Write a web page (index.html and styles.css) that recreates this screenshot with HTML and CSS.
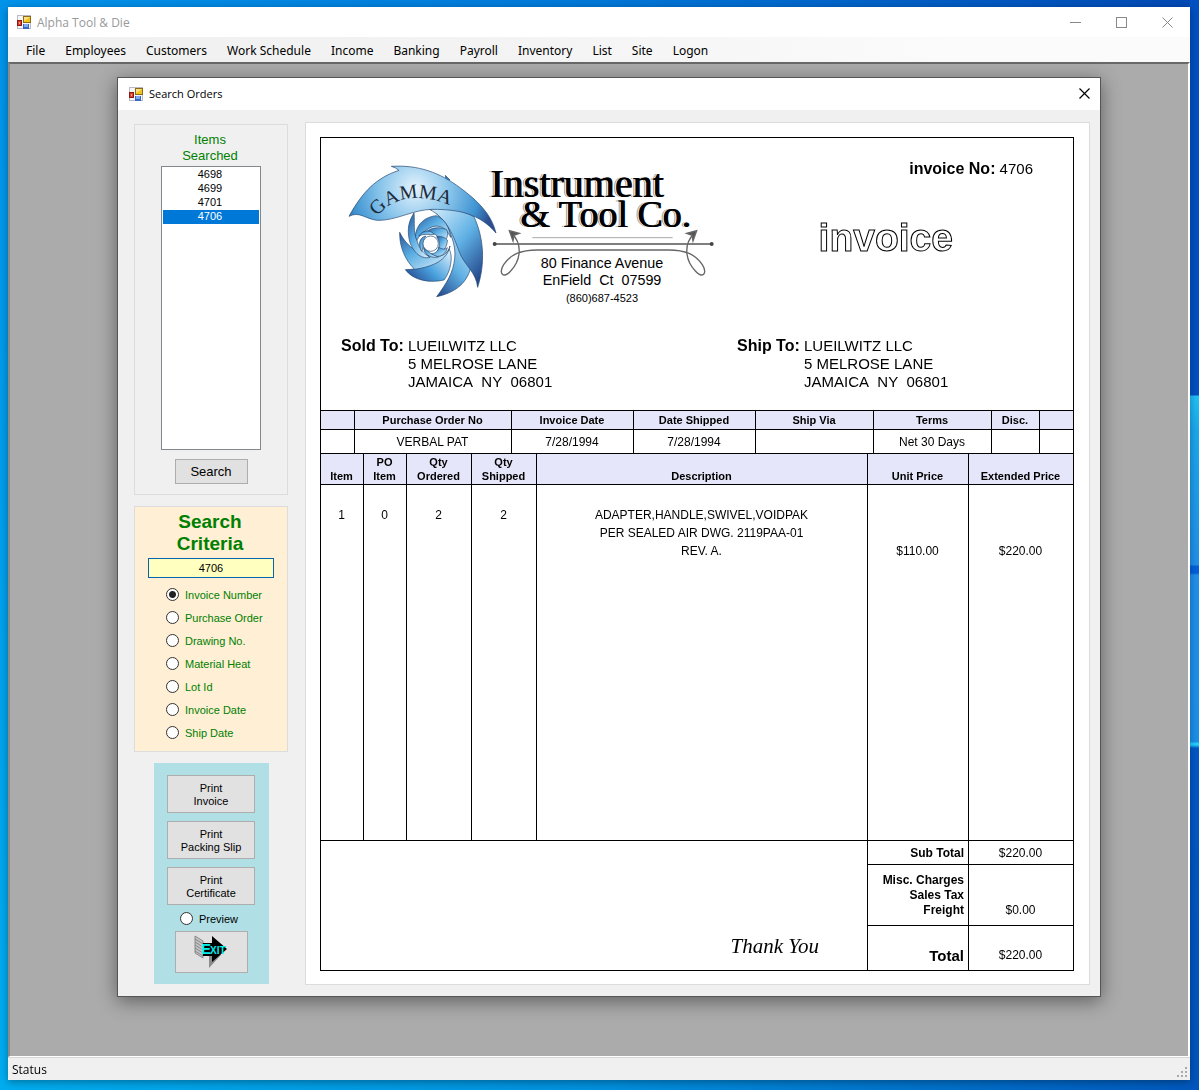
FILE: index.html
```html
<!DOCTYPE html>
<html lang="en">
<head>
<meta charset="utf-8">
<title>Alpha Tool &amp; Die</title>
<link rel="stylesheet" href="styles.css">
</head>
<body>
<svg width="0" height="0" class="defs" aria-hidden="true">
  <symbol id="form-icon" viewBox="0 0 14 14">
    <rect x=".5" y=".5" width="13" height="13" fill="#f6f6f6" stroke="#b9bcc4"/>
    <path d="M6 1h8v7H6z" fill="#8a6a1c"/><path d="M7 2h6v5H7z" fill="#f5c21d"/><path d="M7 2h6L7 6z" fill="#fbe27c"/>
    <path d="M0 5h5v6H0z" fill="#8f1a14"/><path d="M1 6h3v4H1z" fill="#d8402c"/><path d="M2 7h1v2H2z" fill="#f6a08c"/>
    <path d="M6 9h6v5H6z" fill="#3967c8"/><path d="M7 9h4v3H7z" fill="#82aaf0"/>
  </symbol>
</svg>
<div class="app">
  <header class="titlebar titlebar-app">
    <svg class="form-icon" aria-hidden="true"><use href="#form-icon"/></svg>
    <span class="caption">Alpha Tool &amp; Die</span>
    <div class="window-buttons">
      <button type="button" aria-label="Minimize"><svg width="11" height="11"><path d="M0 5.500h11" stroke="#888"/></svg></button>
      <button type="button" aria-label="Maximize"><svg width="11" height="11"><rect x=".5" y=".5" width="10" height="10" fill="none" stroke="#888"/></svg></button>
      <button type="button" aria-label="Close"><svg width="11" height="11"><path d="M.5 .5l10 10M10.500 .5l-10 10" stroke="#888"/></svg></button>
    </div>
  </header>
  <nav class="menu">
    <a href="#">File</a><a href="#">Employees</a><a href="#">Customers</a><a href="#">Work Schedule</a><a href="#">Income</a><a href="#">Banking</a><a href="#">Payroll</a><a href="#">Inventory</a><a href="#">List</a><a href="#">Site</a><a href="#">Logon</a>
  </nav>
  <main class="workspace">
    <section class="dialog">
      <header class="titlebar titlebar-dialog">
        <svg class="form-icon" aria-hidden="true"><use href="#form-icon"/></svg>
        <span class="caption">Search Orders</span>
        <button type="button" class="dialog-close" aria-label="Close"><svg width="11" height="11"><path d="M.5 .5l10 10M10.500 .5l-10 10" stroke="#000" stroke-width="1.200"/></svg></button>
      </header>
      <div class="dialog-body">
        <aside class="sidebar">
          <section class="group results">
            <label class="results-title" for="items">Items<br>Searched</label>
            <select id="items" class="listbox" size="20">
              <option>4698</option><option>4699</option><option>4701</option><option selected>4706</option>
            </select>
            <button type="button" class="btn btn-search">Search</button>
          </section>
          <form class="group criteria">
            <h2>Search<br>Criteria</h2>
            <input type="text" class="term" value="4706" aria-label="Search term" autofocus>
            <div class="options">
              <label><input type="radio" name="by" checked>Invoice Number</label>
              <label><input type="radio" name="by">Purchase Order</label>
              <label><input type="radio" name="by">Drawing No.</label>
              <label><input type="radio" name="by">Material Heat</label>
              <label><input type="radio" name="by">Lot Id</label>
              <label><input type="radio" name="by">Invoice Date</label>
              <label><input type="radio" name="by">Ship Date</label>
            </div>
          </form>
          <section class="actions">
            <button type="button" class="btn btn-print">Print<br>Invoice</button>
            <button type="button" class="btn btn-print">Print<br>Packing Slip</button>
            <button type="button" class="btn btn-print">Print<br>Certificate</button>
            <label class="preview"><input type="radio" name="preview">Preview</label>
            <button type="button" class="btn btn-exit" aria-label="Exit">
              <svg width="34" height="34" viewBox="0 0 34 34">
                <path d="M15 20l0 13 12-13z" fill="#8b8b8b"/>
                <g fill="#c4c4c4" stroke="#777" stroke-width=".8">
                  <path d="M1 1l8 5v17l-8-5z"/>
                  <path d="M1 4l8 5M1 7l8 5M1 10l8 5M1 13l8 5M1 16l8 5"/>
                </g>
                <path d="M9 8h9V1l15 13-15 13v-6H9z" fill="#000"/>
                <text x="7" y="19" class="exit-big">E</text><text x="16" y="19" class="exit-small">XIT</text>
              </svg>
            </button>
          </section>
        </aside>

        <div class="sheet">
          <article class="invoice">
            <header class="invoice-head">
              <div class="brand-row">
                <svg class="logo" viewBox="54 36 1098 450" role="img" aria-label="Gamma Instrument and Tool Co.">
                  <defs>
                    <radialGradient id="hood" gradientUnits="userSpaceOnUse" cx="255" cy="115" r="240">
                      <stop offset="0" stop-color="#e4f3fd"/><stop offset=".45" stop-color="#86c3ea"/><stop offset=".8" stop-color="#3f93d2"/><stop offset="1" stop-color="#2b4f92"/>
                    </radialGradient>
                    <linearGradient id="fin1" x1="0" y1="0" x2=".8" y2="1"><stop offset="0" stop-color="#d9effc"/><stop offset=".55" stop-color="#5fb0e4"/><stop offset="1" stop-color="#24498c"/></linearGradient>
                    <linearGradient id="fin2" x1=".7" y1="0" x2=".2" y2="1"><stop offset="0" stop-color="#e4f4fd"/><stop offset=".6" stop-color="#5fb0e4"/><stop offset="1" stop-color="#264d90"/></linearGradient>
                    <linearGradient id="fin3" x1="1" y1="0" x2="0" y2=".7"><stop offset="0" stop-color="#e6f5fd"/><stop offset=".6" stop-color="#4aa2de"/><stop offset="1" stop-color="#2a569a"/></linearGradient>
                    <linearGradient id="fin4" x1="1" y1="1" x2="0" y2="0"><stop offset="0" stop-color="#e6f5fd"/><stop offset=".6" stop-color="#58ace2"/><stop offset="1" stop-color="#2a569a"/></linearGradient>
                    <path id="arc" d="M142 200C184 140 287 120 394 184"/>
                    <g id="curl">
                      <path d="M545 250C578 282 573 330 542 363C520 388 505 370 521 344C542 313 572 300 622 300H819"/>
                      <path d="M538 242l30 8-16 6-3 17z" fill="#555"/>
                    </g>
                  </defs>
                  <g stroke="#23466f" stroke-width="2" stroke-linejoin="round">
                    <path fill="url(#fin2)" d="M352 228C366 262 378 290 374 325C370 368 350 400 320 440C390 425 420 385 425 335C405 280 375 220 310 180Z"/>
                    <path fill="url(#fin1)" d="M298 178C352 205 372 262 388 306C402 345 438 365 443 412C466 340 462 265 432 200C390 176 340 172 298 178Z"/>
                    <path fill="url(#fin3)" d="M226 359C280 358 325 340 358 298C370 320 362 365 342 390C300 400 250 392 226 359Z"/>
                    <path fill="url(#fin4)" d="M209 247C230 290 270 322 330 318C350 312 357 300 360 288C352 330 310 350 254 358C225 330 208 290 209 247Z"/>
                    <path fill="url(#fin4)" d="M318 197C345 207 357 230 362 262C345 225 315 220 290 240C275 250 262 262 257 282C250 240 270 203 318 197Z"/>
                    <path fill="url(#fin4)" d="M252 189C255 215 248 245 262 275C268 295 280 310 300 322C270 330 245 300 238 270C230 235 238 210 252 189Z"/>
                    <g fill="url(#fin4)">
                      <path d="M350 239C328 229 300 232 287 248C310 244 328 258 332 278C350 272 358 255 350 239Z"/>
                      <path d="M352 270C345 262 335 258 320 260C330 275 330 292 322 304C340 306 352 292 352 270Z"/>
                      <path d="M352 293C344 300 334 297 326 292C324 305 314 312 302 311C318 326 346 320 352 293Z"/>
                      <path d="M325 321C306 314 290 305 282 288C276 304 296 328 325 321Z"/>
                      <path d="M275 304C282 290 276 275 287 258C270 262 262 282 275 304Z"/>
                      <path d="M267 257C284 250 296 255 312 253C304 240 280 238 267 257Z"/>
                    </g>
                    <circle cx="302" cy="281" r="23" fill="#fff"/>
                    <path fill="#3b8bc9" d="M346 76l14 14-12 2z"/>
                    <path fill="url(#hood)" d="M57 199C98 125 138 84 207 61Q198 53 184 49C265 44 330 68 390 113C440 150 484 190 498 249C448 190 385 178 308 178C250 178 195 214 140 211C105 206 88 183 57 199Z"/>
                  </g>
                  <text class="logo-arc"><textPath href="#arc">GAMMA</textPath></text>
                  <text x="480" y="142" class="logo-name">Instrument</text>
                  <text x="570" y="231" class="logo-name logo-name-2">&amp; Tool Co.</text>
                  <path d="M607 263h421" stroke="#aaa" stroke-width="3"/>
                  <path d="M494 282h651" stroke="#555" stroke-width="4"/>
                  <g fill="#444"><circle cx="494" cy="282" r="6"/><circle cx="1145" cy="282" r="6"/></g>
                  <g fill="none" stroke="#666" stroke-width="4"><use href="#curl"/><use href="#curl" transform="matrix(-1 0 0 1 1638 0)"/></g>
                  <g class="logo-address">
                    <text x="816" y="354">80 Finance Avenue</text>
                    <text x="816" y="405">EnField&nbsp; Ct&nbsp; 07599</text>
                    <text x="816" y="456" class="logo-phone">(860)687-4523</text>
                  </g>
                </svg>
                <div class="invoice-id">
                  <p class="number"><b>invoice No:</b> 4706</p>
                  <h1>invoice</h1>
                </div>
              </div>
              <div class="addresses">
                <div class="address"><b>Sold To:</b><address>LUEILWITZ LLC<br>5 MELROSE LANE<br>JAMAICA&nbsp; NY&nbsp; 06801</address></div>
                <div class="address"><b>Ship To:</b><address>LUEILWITZ LLC<br>5 MELROSE LANE<br>JAMAICA&nbsp; NY&nbsp; 06801</address></div>
              </div>
            </header>

            <table class="grid order">
              <colgroup><col class="w34"><col class="w157"><col class="w122"><col class="w122"><col><col class="w118"><col class="w48"><col class="w33"></colgroup>
              <thead><tr><th></th><th>Purchase Order No</th><th>Invoice Date</th><th>Date Shipped</th><th>Ship Via</th><th>Terms</th><th>Disc.</th><th></th></tr></thead>
              <tbody><tr><td></td><td>VERBAL PAT</td><td>7/28/1994</td><td>7/28/1994</td><td></td><td>Net 30 Days</td><td></td><td></td></tr></tbody>
            </table>

            <table class="grid lines">
              <colgroup><col class="w43"><col class="w43"><col class="w65"><col class="w65"><col><col class="w101"><col class="w104"></colgroup>
              <thead><tr><th>Item</th><th>PO<br>Item</th><th>Qty<br>Ordered</th><th>Qty<br>Shipped</th><th>Description</th><th>Unit Price</th><th>Extended Price</th></tr></thead>
              <tbody><tr><td>1</td><td>0</td><td>2</td><td>2</td><td>ADAPTER,HANDLE,SWIVEL,VOIDPAK<br>PER SEALED AIR DWG. 2119PAA-01<br>REV. A.</td><td class="price">$110.00</td><td class="price">$220.00</td></tr></tbody>
            </table>

            <table class="grid totals">
              <colgroup><col><col class="w101"><col class="w104"></colgroup>
              <tbody>
                <tr class="subtotal"><td rowspan="3" class="thanks">Thank You</td><th>Sub Total</th><td>$220.00</td></tr>
                <tr class="charges"><th>Misc. Charges<br>Sales Tax<br>Freight</th><td>$0.00</td></tr>
                <tr class="total"><th>Total</th><td>$220.00</td></tr>
              </tbody>
            </table>
          </article>
        </div>
      </div>
    </section>
  </main>
  <footer class="status"><span>Status</span>
    <svg width="11" height="11" fill="#aaa" aria-hidden="true"><path d="M8 0h2v2H8zM4 4h2v2H4zM8 4h2v2H8zM0 8h2v2H0zM4 8h2v2H4zM8 8h2v2H8z"/></svg>
  </footer>
</div>
</body>
</html>
```
FILE: styles.css
```css
* { box-sizing: border-box; }

body {
  margin: 0;
  min-height: 100vh;
  padding: 7px 9px 10px 8px;
  display: flex;
  font-family: "Liberation Sans", Arial, sans-serif;
  font-size: 12px;
  color: #000;
  background:
    linear-gradient(#0050c4 0 395px, #1fc0f8 396px 398px, #1ba8ee 430px, #2090ea 565px, #0062dc 566px 573px, #2090ea 575px, #1b90ea 742px, #22d0ff 743px 745px, #0058c8 748px, #0055bc) right top / 9px 100% no-repeat,
    linear-gradient(to right, #00adef, #0090dd 50%, #0058bc) left bottom / 100% 10px no-repeat,
    linear-gradient(#0093ea, #00adf0) left top / 8px 100% no-repeat,
    linear-gradient(to right, #0093ea, #0078d8 50%, #0048b4);
}

.defs { position: absolute; }

button { font: inherit; color: inherit; }
p, h1, h2 { margin: 0; }

.app {
  flex: 1;
  min-width: 0;
  display: flex;
  flex-direction: column;
  background: #f0f0f0;
  box-shadow: 0 2px 8px rgba(0, 0, 0, .35);
}

.titlebar {
  display: flex;
  align-items: center;
  background: #fff;
  font-family: "Open Sans", "Noto Sans", sans-serif;
}
.titlebar-app { height: 30px; padding-left: 9px; font-size: 12px; color: #999; }
.titlebar-dialog { height: 32px; padding: 0 0 1px 11px; font-size: 11px; }
.form-icon { width: 14px; height: 14px; }
.caption { flex: 1; padding-left: 6px; }

.window-buttons { display: flex; }
.window-buttons button,
.dialog-close {
  width: 46px;
  height: 28px;
  padding: 0;
  border: 0;
  background: none;
  display: grid;
  place-items: center;
}
.dialog-close { width: 31px; }

.menu {
  height: 25px;
  padding: 1px 0 0 18px;
  display: flex;
  align-items: center;
  gap: 20px;
  background: linear-gradient(to right, #f0f0f0, #f3f3f3 40%, #fbfbfb 80%);
  font-family: "Noto Sans", "Open Sans", sans-serif;
  font-size: 12px;
}
.menu a { color: #000; text-decoration: none; }

.workspace {
  flex: 1;
  padding: 13px 87px 59px 107px;
  border: 2px solid #696969;
  border-width: 2px 2px 1px;
  border-color: #696969 #fff #fff #8a8a8a;
  background: #ababab;
}

.dialog {
  border: 1px solid #555;
  background: #f0f0f0;
  box-shadow: 0 4px 18px rgba(0, 0, 0, .45);
}
.dialog-body {
  display: flex;
  gap: 17px;
  padding: 12px 10px 11px 16px;
}

.sidebar {
  width: 154px;
  padding-top: 2px;
  display: flex;
  flex-direction: column;
  align-items: center;
  font-size: 11px;
}
.group {
  width: 100%;
  border: 1px solid #dcdcdc;
  display: flex;
  flex-direction: column;
  align-items: center;
  margin-bottom: 11px;
}
.results { padding: 7px 0 10px; }
.results-title {
  margin-bottom: 2px;
  padding-right: 2px;
  font-size: 13px;
  line-height: 16px;
  text-align: center;
  color: #008000;
}
.listbox {
  width: 100px;
  height: 284px;
  margin-bottom: 9px;
  padding: 1px;
  border: 1px solid #828790;
  border-radius: 0;
  background: #fff;
  font: 11px/14px "Liberation Sans", Arial, sans-serif;
  overflow: hidden;
  outline: 0;
}
.listbox option { min-height: 14px; padding: 0 2px 0 0; line-height: 14px; text-align: center; }
.listbox option:checked {
  background: linear-gradient(#0078d7, #0078d7);
  -webkit-text-fill-color: #fff;
}

.btn {
  padding: 0;
  border: 1px solid #adadad;
  background: #e1e1e1;
}
.btn-search { width: 73px; height: 25px; font-size: 13px; }

.criteria { padding: 4px 0 7px; background: #ffefd5; color: #008000; }
.criteria h2 { padding-right: 2px; font-size: 19px; line-height: 22px; text-align: center; }
.term {
  width: 126px;
  height: 20px;
  margin: 3px 0 5px;
  padding: 0;
  border: 1px solid #0a64ad;
  background: #ffffc0;
  font: 11px "Liberation Sans", Arial, sans-serif;
  text-align: center;
  outline: 0;
}
.options { align-self: stretch; padding-left: 31px; }
.options label,
.preview { display: flex; align-items: center; gap: 6px; height: 23px; }
input[type="radio"] {
  appearance: none;
  width: 13px;
  height: 13px;
  margin: 0;
  border: 1px solid #333;
  border-radius: 50%;
  background: #fff;
}
input[type="radio"]:checked { background: radial-gradient(circle, #222 3px, #fff 4px); }

.actions {
  width: 115px;
  padding: 12px 0 11px;
  display: flex;
  flex-direction: column;
  align-items: center;
  background: #b0e0e6;
}
.btn-print { width: 88px; height: 38px; margin-bottom: 8px; padding-top: 1px; line-height: 13px; }
.preview { height: 21px; margin: -5px 0 2px; padding-right: 4px; }
.btn-exit { width: 73px; height: 42px; display: grid; place-items: center; }
.exit-big, .exit-small { font-family: "Liberation Sans", Arial, sans-serif; font-weight: bold; fill: #00f0f0; }
.exit-big { font-size: 15px; }
.exit-small { font-size: 10px; }

.sheet {
  flex: 1;
  min-width: 0;
  padding: 14px 15px 13px 14px;
  border: 1px solid #dcdcdc;
  background: #fff;
}
.invoice { border: 1px solid #000; }

.invoice-head { height: 272px; padding-top: 22px; }
.brand-row {
  display: flex;
  justify-content: space-between;
  padding: 0 40px 0 27px;
  margin-bottom: 25px;
}
.logo { width: 366px; height: 150px; margin-top: 2px; }
.logo-arc { font: 60px "Liberation Serif", serif; fill: #1d2b3a; }
.logo-name {
  font: 120px "Liberation Serif", serif;
  text-shadow: 1px 0 #000, -1px 0 #fff, -2px 0 #999;
}
.logo-name-2 { font-size: 114px; }
.logo-address { font: 43px "Liberation Sans", Arial, sans-serif; text-anchor: middle; }
.logo-phone { font-size: 33px; }

.invoice-id { display: flex; flex-direction: column; align-items: flex-end; }
.number { font-size: 15px; line-height: 18px; }
.number b { font-size: 16px; }
.invoice-id h1 {
  margin: 34px 80px 0 0;
  font: bold 39px/52px "Liberation Sans", Arial, sans-serif;
  color: #fff;
  -webkit-text-stroke: 1px #000;
}

.addresses { display: grid; grid-template-columns: 396px 1fr; padding-left: 20px; }
.address { display: flex; gap: 4px; font-size: 15px; line-height: 18px; }
.address b { font-size: 16px; width: 63px; white-space: nowrap; }
.address address { font-style: normal; }

.grid {
  width: 100%;
  table-layout: fixed;
  border-collapse: separate;
  border-spacing: 0;
  text-align: center;
}
.grid th, .grid td {
  padding: 0 1px 0 0;
  border-right: 1px solid #000;
  border-bottom: 1px solid #000;
}
.grid tr > :last-child { border-right: 0; }
.grid thead th { background: #e6e6fa; font-size: 11px; line-height: 14px; }
.order { border-top: 1px solid #000; }
.order th { height: 19px; }
.order td { height: 24px; }
.lines th { height: 31px; padding-bottom: 1px; vertical-align: bottom; }
.lines td { height: 356px; padding-top: 21px; line-height: 18px; vertical-align: top; }
.lines .price { padding-top: 57px; }

.totals th { padding-right: 4px; text-align: right; font-size: 12px; line-height: 15px; }
.totals .subtotal { height: 24px; }
.totals .subtotal th { padding-top: 2px; }
.totals .charges { height: 61px; }
.totals .charges th { padding-top: 1px; }
.totals .charges td { padding-bottom: 8px; vertical-align: bottom; }
.totals .total { height: 44px; }
.totals .total th, .totals .total td { border-bottom: 0; padding-top: 14px; }
.totals .total th { font-size: 15px; }
.totals .thanks {
  padding: 0 48px 12px 0;
  border-bottom: 0;
  vertical-align: bottom;
  text-align: right;
  font: italic 21px/24px "Liberation Serif", cursive;
}

.w33 { width: 33px; }
.w34 { width: 34px; }
.w43 { width: 43px; }
.w48 { width: 48px; }
.w65 { width: 65px; }
.w101 { width: 101px; }
.w104 { width: 104px; }
.w118 { width: 118px; }
.w122 { width: 122px; }
.w157 { width: 157px; }

.status {
  height: 23px;
  padding: 0 2px 0 4px;
  border-top: 1px solid #d7d7d7;
  display: flex;
  align-items: center;
  justify-content: space-between;
  font-family: "Open Sans", "Noto Sans", sans-serif;
}
.status svg { align-self: flex-end; margin-bottom: 2px; }
```
